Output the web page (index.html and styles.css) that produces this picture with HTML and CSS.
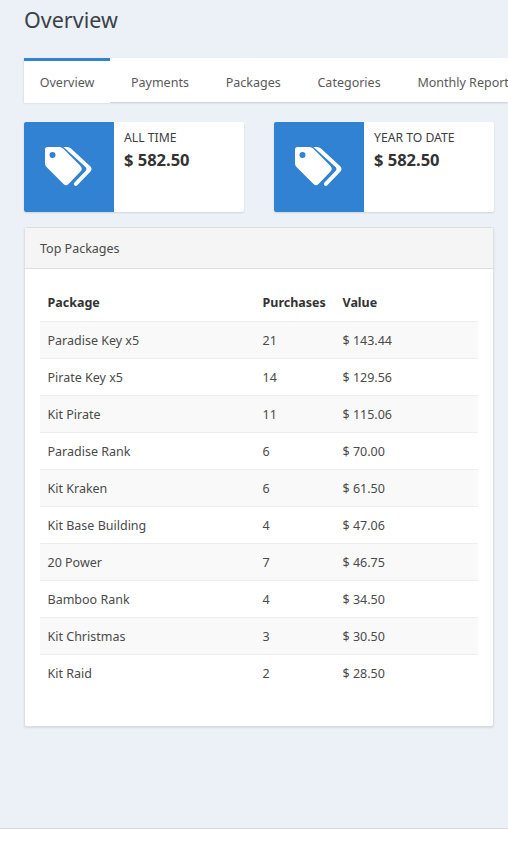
FILE: index.html
```html
<!DOCTYPE html>
<html>
  <head>
    <title>Overview</title>
    <meta charset="UTF-8" />
    <link rel="stylesheet" href="styles.css">
  </head>

  <body>
    <svg class="defs" width="0" height="0">
      <symbol id="tags" viewBox="0 0 90 90">
        <path fill="#fff" fill-rule="evenodd" d="M23.5 25H35.5Q37.7 25 39.2 26.5L56.5 44Q59 46.800 56.5 49.500L44.500 62Q42 64.500 39.500 62L22.500 45Q21 43.500 21 41.500V27.500Q21 25 23.500 25ZM25.500 33a3 3 0 1 0 6 0a3 3 0 1 0-6 0Z"/>
        <path fill="#fff" d="M39.500 25H43Q45.500 25 47 26.500L66.500 44.500Q68.500 47 66.500 49.500L53.500 63Q52 64.500 50.500 63.500Q49 62 50.500 60.500L62 48.500Q63 47 62 45.500Z"/>
      </symbol>
    </svg>

    <div class="content">
      <h1 class="pageTitle">Overview</h1>

      <div class="tabs">
        <a class="tab active">Overview</a>
        <a class="tab">Payments</a>
        <a class="tab">Packages</a>
        <a class="tab">Categories</a>
        <a class="tab">Monthly Report</a>
      </div>

      <div class="stats">
        <div class="statBox">
          <div class="statIcon"><svg width="90" height="90"><use href="#tags"/></svg></div>
          <div class="statText">
            <span class="statLabel">ALL TIME</span>
            <span class="statValue">$ 582.50</span>
          </div>
        </div>
        <div class="statBox">
          <div class="statIcon"><svg width="90" height="90"><use href="#tags"/></svg></div>
          <div class="statText">
            <span class="statLabel">YEAR TO DATE</span>
            <span class="statValue">$ 582.50</span>
          </div>
        </div>
      </div>

      <div class="panel">
        <div class="panelHead">Top Packages</div>
        <div class="panelBody">
          <table>
            <thead>
              <tr><th class="name">Package</th><th class="count">Purchases</th><th>Value</th></tr>
            </thead>
            <tbody>
              <tr><td>Paradise Key x5</td><td>21</td><td>$ 143.44</td></tr>
              <tr><td>Pirate Key x5</td><td>14</td><td>$ 129.56</td></tr>
              <tr><td>Kit Pirate</td><td>11</td><td>$ 115.06</td></tr>
              <tr><td>Paradise Rank</td><td>6</td><td>$ 70.00</td></tr>
              <tr><td>Kit Kraken</td><td>6</td><td>$ 61.50</td></tr>
              <tr><td>Kit Base Building</td><td>4</td><td>$ 47.06</td></tr>
              <tr><td>20 Power</td><td>7</td><td>$ 46.75</td></tr>
              <tr><td>Bamboo Rank</td><td>4</td><td>$ 34.50</td></tr>
              <tr><td>Kit Christmas</td><td>3</td><td>$ 30.50</td></tr>
              <tr><td>Kit Raid</td><td>2</td><td>$ 28.50</td></tr>
            </tbody>
          </table>
        </div>
      </div>
    </div>

    <div class="footer"></div>
  </body>
</html>
```

FILE: styles.css
```css
html * {
  margin: 0;
  padding: 0;
  box-sizing: border-box;
}

html,
body {
  height: 843px;
  overflow: hidden;
}

body {
  background-color: #ecf0f7;
  font-family: "Noto Sans", sans-serif;
  font-size: 12.5px;
  color: #4a4a4a;
  display: flex;
  flex-direction: column;
}

.defs {
  display: block;
  height: 0;
}

.content {
  height: 828px;
  padding: 0 14px 0 24px;
}

.pageTitle {
  font-size: 21.5px;
  font-weight: 400;
  line-height: 30px;
  padding-top: 5px;
  height: 58px;
  color: #3a4248;
}

.tabs {
  display: flex;
  height: 44px;
  margin-right: -14px;
  background-color: #fff;
  box-shadow: 0 1px 2px rgba(0, 0, 0, 0.15);
}

.tab {
  flex: none;
  padding: 0 18.4px;
  line-height: 50px;
  height: 45px;
  color: #595959;
}

.tab.active {
  width: 86px;
  margin-right: 2.6px;
  padding: 0;
  text-align: center;
  border-top: 3px solid #3182d2;
  line-height: 44px;
  background-color: #fff;
}

.stats {
  display: grid;
  grid-template-columns: 220px 220px;
  gap: 30px;
  margin-top: 20px;
}

.statBox {
  display: flex;
  height: 90px;
  background-color: #fff;
  border-radius: 2px;
  box-shadow: 0 1px 2px rgba(0, 0, 0, 0.12);
}

.statIcon {
  width: 90px;
  height: 90px;
  background-color: #3182d2;
  border-radius: 2px 0 0 2px;
}

.statIcon svg {
  display: block;
}

.statText {
  display: flex;
  flex-direction: column;
  padding: 7px 10px;
}

.statLabel {
  font-size: 12.2px;
  line-height: 18px;
  color: #3d3d3d;
}

.statValue {
  font-size: 16.5px;
  font-weight: 700;
  line-height: 26px;
  color: #333;
}

.panel {
  width: 470px;
  height: 500px;
  margin-top: 15px;
  background-color: #fff;
  border: 1px solid #dcdfe3;
  border-radius: 3px;
  box-shadow: 0 1px 2px rgba(0, 0, 0, 0.1);
}

.panelHead {
  height: 41px;
  padding: 0 15px;
  line-height: 41px;
  background-color: #f5f5f5;
  border-bottom: 1px solid #dcdfe3;
}

.panelBody {
  padding: 15px;
}

table {
  width: 438px;
  border-collapse: collapse;
  table-layout: fixed;
}

th {
  height: 37px;
  padding: 0 7.5px;
  text-align: left;
  font-weight: 700;
  color: #333;
}

th.name {
  width: 215px;
}

th.count {
  width: 80px;
}

td {
  height: 37px;
  padding: 2px 7.5px 0;
  border-top: 1px solid #eeeeee;
}

tbody tr:nth-child(odd) {
  background-color: #f9f9f9;
}

.footer {
  flex: 1;
  background-color: #fff;
  border-top: 1px solid #d2d6de;
}
```
